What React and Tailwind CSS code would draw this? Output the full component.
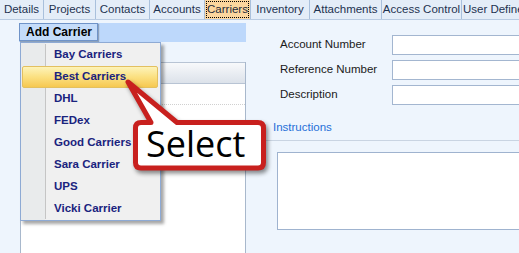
import React from "react";

const tabs = [
  { label: "Details", w: "w-[44px]" },
  { label: "Projects", w: "w-[52px]" },
  { label: "Contacts", w: "w-[54px]" },
  { label: "Accounts", w: "w-[55px]" },
  { label: "Carriers", w: "w-[46px]", active: true },
  { label: "Inventory", w: "w-[59px]" },
  { label: "Attachments", w: "w-[72px]" },
  { label: "Access Control", w: "w-[80px]" },
  { label: "User Defined", w: "w-[70px]" },
];

const carriers = [
  "Bay Carriers",
  "Best Carriers",
  "DHL",
  "FEDex",
  "Good Carriers",
  "Sara Carrier",
  "UPS",
  "Vicki Carrier",
];

const fields = ["Account Number", "Reference Number", "Description"];

const TabBar = () => (
  <div className="flex h-[20px] border-b border-[#b9cbe2] bg-[#e4edf8] overflow-hidden whitespace-nowrap">
    {tabs.map((t) =>
      t.active ? (
        <div
          key={t.label}
          className={`${t.w} shrink-0 h-full bg-[#fcd69e] border-r border-[#a9c0dc] p-[1px]`}
        >
          <div className="h-full border border-dotted border-black flex items-center justify-center text-[11.5px] text-[#1e2a3a]">
            {t.label}
          </div>
        </div>
      ) : (
        <div
          key={t.label}
          className={`${t.w} shrink-0 h-full border-r border-[#a9c0dc] flex items-center justify-center text-[11.5px] text-[#1e3250]`}
        >
          {t.label}
        </div>
      )
    )}
  </div>
);

const CarrierMenu = () => (
  <div className="absolute left-[20px] top-[42px] w-[141px] h-[179px] bg-[#f0f0f0] border border-[#8eaad4] shadow-[3px_3px_3px_rgba(0,0,0,0.35)] py-[1px] px-[1px]">
    <div className="absolute left-[24px] top-[1px] bottom-[1px] w-px bg-[#c5c5c5]" />
    <div className="absolute left-0 top-0 bottom-0 w-[24px] bg-[#e9ebec]" />
    <div className="relative flex flex-col">
      {carriers.map((c) => (
        <div
          key={c}
          className={
            c === "Best Carriers"
              ? "h-[22px] flex items-center pl-[31px] mr-[1px] rounded-[2px] border border-[#e3c060] bg-gradient-to-b from-[#fdf3b8] via-[#fbe080] to-[#f6c850] text-[11.5px] font-bold text-[#1a237e]"
              : "h-[22px] flex items-center pl-[32px] text-[11.5px] font-bold text-[#1a237e]"
          }
        >
          {c}
        </div>
      ))}
    </div>
  </div>
);

const Callout = () => (
  <div className="absolute left-[124px] top-[78px] w-[150px] h-[100px]">
    <svg
      width="150"
      height="100"
      viewBox="0 0 150 100"
      className="absolute left-0 top-0 drop-shadow-[2px_3px_2px_rgba(0,0,0,0.45)]"
    >
      <path
        d="M4 4 L53 44.5 L134 44.5 Q139.5 44.5 139.5 50 L139.5 84.5 Q139.5 90 134 90 L17 90 Q11.5 90 11.5 84.5 L11.5 50 Q11.5 44.5 17 44.5 L27 44.5 Z"
        fill="#ffffff"
        stroke="#c8201e"
        strokeWidth="5"
        strokeLinejoin="round"
      />
    </svg>
    <div className="absolute left-[22px] top-[43px] text-[36px] leading-[46px] text-black font-['Open_Sans',sans-serif]">
      Select
    </div>
  </div>
);

export default function App() {
  return (
    <div className="relative w-[519px] h-[253px] overflow-hidden bg-[#eef5fd] font-['Liberation_Sans',Arial,sans-serif]">
      <TabBar />
      <div className="flex h-[233px]">
        {/* left: carriers grid */}
        <div className="w-[246px] shrink-0 pl-[19px] pt-[3px] flex flex-col">
          <div className="h-[19px] bg-[#bdd8fb] flex">
            <div className="h-[18px] w-[79px] bg-[#c4dcfa] border border-[#6f93c8] shadow-[1px_1px_1px_rgba(0,0,0,0.25)] flex items-center pl-[6px] text-[12px] font-bold text-black">
              Add Carrier
            </div>
          </div>
          <div className="h-[20px]" />
          <div className="flex-1 ml-[1px] border-l border-r border-[#a8b8cc] bg-white flex flex-col">
            <div className="h-[22px] bg-gradient-to-b from-[#f8f9fb] to-[#dce2ea] border-t border-b border-[#b8c4d4]" />
            <div className="h-[21px] border-b border-dotted border-[#d0d0d0]" />
          </div>
        </div>

        {/* right: form */}
        <div className="flex-1 pl-[20px] pt-[15px] flex flex-col">
          <div className="flex flex-col gap-[5px] pl-[14px]">
            {fields.map((f) => (
              <div key={f} className="flex items-center h-[20px]">
                <div className="w-[112px] text-[11.5px] text-[#1a1a1a]">{f}</div>
                <div className="flex-1 h-[20px] bg-white border border-[#a3b6d0] mr-[-4px]" />
              </div>
            ))}
          </div>
          <div className="mt-[14px] pl-[7px] text-[11.5px] text-[#1f6fd8] h-[16px] leading-[16px]">
            Instructions
          </div>
          <div className="mt-[5px] border-t border-[#c9d4e2]" />
          <div className="mt-[11px] ml-[11px] h-[78px] bg-white border border-[#9fb3cf] mr-[-4px]" />
        </div>
      </div>
      <CarrierMenu />
      <Callout />
    </div>
  );
}
